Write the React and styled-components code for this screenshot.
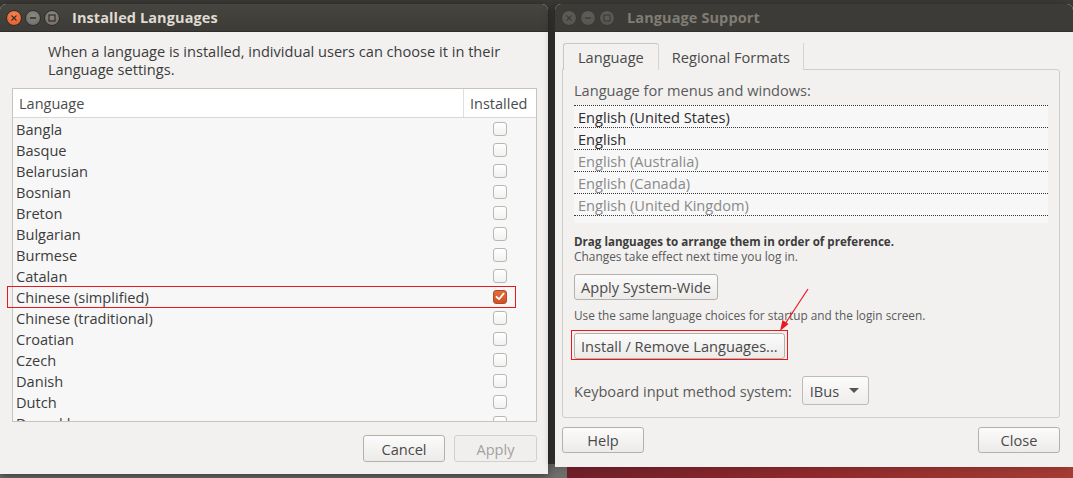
import React from 'react'
import styled, { createGlobalStyle } from 'styled-components'

const GlobalStyle = createGlobalStyle`
  html, body {
    margin: 0;
    padding: 0;
    width: 100%;
    height: 100%;
    overflow: hidden;
  }
  body {
    font-family: "Open Sans", "Noto Sans", "DejaVu Sans", sans-serif;
    background: #3b3a36;
  }
`

const Desktop = styled.div`
  position: relative;
  width: 1073px;
  height: 478px;
  background: #3b3a36;
  overflow: hidden;
`

const BottomStrip = styled.div`
  position: absolute;
  left: 0;
  right: 0;
  bottom: 0;
  height: 14px;
  background: #6e6e6c;
`

const Wallpaper = styled.div`
  position: absolute;
  left: 567px;
  right: 0;
  bottom: 0;
  height: 30px;
  background: linear-gradient(90deg, #6f1f2a 0%, #8f2a2c 50%, #a43c33 100%);
`

const Window = styled.div`
  position: absolute;
  left: ${p => p.$left}px;
  top: ${p => p.$top}px;
  width: ${p => p.$width}px;
  height: ${p => p.$height}px;
  display: flex;
  flex-direction: column;
  border-radius: 6px 6px 0 0;
  background: #f2f1f0;
  box-shadow: ${p => (p.$focused ? '0 2px 8px rgba(0,0,0,0.5)' : '-5px 0 8px -1px rgba(0,0,0,0.28)')};
  overflow: hidden;
`

const TitleBar = styled.div`
  height: 27px;
  flex: none;
  display: flex;
  align-items: center;
  padding-left: 6px;
  background: ${p => (p.$focused ? 'linear-gradient(#46453f, #3c3b37)' : '#3c3b37')};
  border-bottom: 1px solid ${p => (p.$focused ? '#2e2d2a' : '#33322e')};
`

const TitleButtons = styled.div`
  display: flex;
  gap: 3px;
  margin-right: 12px;
`

const RoundButton = styled.div`
  width: 16px;
  height: 16px;
  border-radius: 50%;
  display: flex;
  align-items: center;
  justify-content: center;
  box-sizing: border-box;
  border: 1px solid ${p => (p.$focused ? '#2f2e2b' : '#3a3935')};
  background: ${p =>
    p.$kind === 'close' && p.$focused
      ? 'radial-gradient(circle at 50% 35%, #f58a5c, #e2511f)'
      : p.$focused
        ? 'radial-gradient(circle at 50% 35%, #8a8883, #6c6a65)'
        : 'radial-gradient(circle at 50% 35%, #5e5d58, #54534e)'};
  color: ${p => (p.$focused ? '#3a2a25' : '#3e3d39')};
`

const TitleText = styled.div`
  font-weight: 700;
  font-size: 14.5px;
  color: ${p => (p.$focused ? '#dfdbd2' : '#807d74')};
  letter-spacing: 0.1px;
`

const Glyph = ({ kind }) => {
  if (kind === 'close') {
    return (
      <svg width="8" height="8" viewBox="0 0 8 8">
        <path d="M1.5 1.5 L6.5 6.5 M6.5 1.5 L1.5 6.5" stroke="currentColor" strokeWidth="1.2" />
      </svg>
    )
  }
  if (kind === 'min') {
    return (
      <svg width="8" height="8" viewBox="0 0 8 8">
        <path d="M1 4 H7" stroke="currentColor" strokeWidth="1.4" />
      </svg>
    )
  }
  return (
    <svg width="8" height="8" viewBox="0 0 8 8">
      <rect x="1" y="1" width="6" height="6" fill="none" stroke="currentColor" strokeWidth="1.2" />
    </svg>
  )
}

const WindowTitle = ({ focused, children }) => (
  <TitleBar $focused={focused}>
    <TitleButtons>
      {['close', 'min', 'max'].map(k => (
        <RoundButton key={k} $kind={k} $focused={focused}>
          <Glyph kind={k} />
        </RoundButton>
      ))}
    </TitleButtons>
    <TitleText $focused={focused}>{children}</TitleText>
  </TitleBar>
)

/* ---------- left dialog ---------- */

const DialogBody = styled.div`
  flex: 1;
  display: flex;
  flex-direction: column;
  padding: 10px 11px 0 12px;
  color: #3c3c3c;
`

const Intro = styled.p`
  margin: 0 0 10px 36px;
  font-size: 14.6px;
  line-height: 18px;
`

const Tree = styled.div`
  height: 334px;
  box-sizing: border-box;
  border: 1px solid #c6c4c0;
  background: #f7f7f7;
  display: flex;
  flex-direction: column;
  overflow: hidden;
`

const TreeHeader = styled.div`
  height: 28px;
  flex: none;
  display: flex;
  background: #ffffff;
  border-bottom: 1px solid #d9d7d3;
  font-size: 14.5px;
  color: #4c4c4c;
`

const HeaderCell = styled.div`
  display: flex;
  align-items: center;
  padding-left: 6px;
  flex: ${p => (p.$grow ? 1 : 'none')};
  width: ${p => (p.$grow ? 'auto' : '66px')};
  border-left: ${p => (p.$grow ? 'none' : '1px solid #e0deda')};
`

const TreeRow = styled.div`
  height: 21px;
  flex: none;
  display: flex;
  align-items: center;
  font-size: 14.6px;
`

const RowName = styled.div`
  flex: 1;
  padding-left: 3px;
  white-space: nowrap;
`

const RowCheck = styled.div`
  width: 73px;
  display: flex;
  justify-content: center;
`

const Checkbox = styled.div`
  width: 14px;
  height: 14px;
  box-sizing: border-box;
  border-radius: 3px;
  border: 1px solid ${p => (p.$checked ? '#b24a24' : '#b9b7b2')};
  background: ${p => (p.$checked ? 'linear-gradient(#e56a3c, #cf5326)' : 'linear-gradient(#ffffff, #f1f1f0)')};
  display: flex;
  align-items: center;
  justify-content: center;
`

const ButtonRow = styled.div`
  display: flex;
  justify-content: ${p => (p.$spread ? 'space-between' : 'flex-end')};
  gap: 9px;
  margin-top: ${p => p.$top}px;
`

const Button = styled.div`
  width: ${p => (p.$width ? `${p.$width}px` : 'auto')};
  height: ${p => p.$height || 27}px;
  box-sizing: border-box;
  padding: 0 ${p => (p.$width ? 0 : 6)}px;
  display: inline-flex;
  align-items: center;
  justify-content: center;
  border-radius: 3px;
  border: 1px solid ${p => (p.$disabled ? '#d2d0cc' : '#b3b1ac')};
  background: ${p => (p.$disabled ? '#f0efee' : 'linear-gradient(#fbfbfb, #ecebe9)')};
  color: ${p => (p.$disabled ? '#a3a29e' : '#4a4a4a')};
  font-size: 14.6px;
  white-space: nowrap;
`

const Highlight = styled.div`
  position: absolute;
  left: ${p => p.$left}px;
  top: ${p => p.$top}px;
  width: ${p => p.$width}px;
  height: ${p => p.$height}px;
  border: 1px solid #e8191d;
  box-sizing: border-box;
  pointer-events: none;
`

const languages = [
  'Bangla', 'Basque', 'Belarusian', 'Bosnian', 'Breton', 'Bulgarian', 'Burmese',
  'Catalan', 'Chinese (simplified)', 'Chinese (traditional)', 'Croatian', 'Czech',
  'Danish', 'Dutch', 'Dzongkha',
]

const CheckMark = () => (
  <svg width="10" height="9" viewBox="0 0 10 9">
    <path d="M1.5 4.8 L4 7.2 L8.6 1.6" fill="none" stroke="#ffffff" strokeWidth="1.8" strokeLinecap="round" strokeLinejoin="round" />
  </svg>
)

const InstalledLanguages = () => (
  <Window $left={0} $top={4} $width={548} $height={470} $focused>
    <WindowTitle focused>Installed Languages</WindowTitle>
    <DialogBody>
      <Intro>
        When a language is installed, individual users can choose it in their
        <br />
        Language settings.
      </Intro>
      <Tree>
        <TreeHeader>
          <HeaderCell $grow>Language</HeaderCell>
          <HeaderCell>Installed</HeaderCell>
        </TreeHeader>
        {languages.map(name => {
          const checked = name === 'Chinese (simplified)'
          return (
            <TreeRow key={name}>
              <RowName>{name}</RowName>
              <RowCheck>
                <Checkbox $checked={checked}>{checked && <CheckMark />}</Checkbox>
              </RowCheck>
            </TreeRow>
          )
        })}
      </Tree>
      <ButtonRow $top={13}>
        <Button $width={82}>Cancel</Button>
        <Button $width={83} $disabled>Apply</Button>
      </ButtonRow>
    </DialogBody>
    <Highlight $left={7} $top={282} $width={509} $height={22} />
  </Window>
)

/* ---------- right window ---------- */

const SupportBody = styled.div`
  flex: 1;
  display: flex;
  flex-direction: column;
  padding: 11px 13px 0 7px;
  color: #4a4a4a;
`

const Tabs = styled.div`
  display: flex;
  height: 26px;
  padding-left: 1px;
`

const Tab = styled.div`
  display: flex;
  align-items: center;
  padding: 0 ${p => (p.$active ? 14 : 13)}px;
  font-size: 14.6px;
  box-sizing: border-box;
  color: #4a4a4a;
  border: ${p => (p.$active ? '1px solid #c9c7c2' : 'none')};
  border-right: 1px solid #d6d4cf;
  border-bottom: none;
  border-radius: ${p => (p.$active ? '3px 3px 0 0' : '0')};
  background: #f2f1f0;
  position: relative;
  z-index: 1;
  margin-bottom: -1px;
  height: 27px;
`

const Frame = styled.div`
  height: 349px;
  box-sizing: border-box;
  border: 1px solid #cfcdc8;
  border-radius: 0 3px 3px 3px;
  padding: 11px 11px 0 11px;
  display: flex;
  flex-direction: column;
`

const Label = styled.div`
  font-size: ${p => p.$size || 14.6}px;
  line-height: ${p => p.$line || 18}px;
  font-weight: ${p => (p.$bold ? 700 : 400)};
  color: ${p => (p.$bold ? '#3c3c3c' : '#5a5a5a')};
  margin-top: ${p => p.$top || 0}px;
  white-space: nowrap;
`

const PrefList = styled.div`
  margin-top: 6px;
  background: #f7f7f7;
  padding-bottom: 7px;
`

const PrefRow = styled.div`
  height: 22px;
  box-sizing: border-box;
  display: flex;
  align-items: center;
  padding-left: 4px;
  font-size: 14.6px;
  border-top: 1px dotted #3a3a3a;
  &:last-child {
    border-bottom: 1px dotted #3a3a3a;
    height: 23px;
  }
  color: ${p => (p.$active ? '#2e2e2e' : '#8a8a8a')};
`

const Stack = styled.div`
  margin-top: ${p => p.$top}px;
  display: flex;
`

const RedWrap = styled.div`
  display: inline-flex;
  border: 1px solid #e8191d;
  padding: 2px 2px 0 2px;
  margin-left: -3px;
`

const KeyboardRow = styled.div`
  margin-top: 16px;
  display: flex;
  align-items: center;
  gap: 10px;
`

const Combo = styled.div`
  width: 67px;
  height: 29px;
  box-sizing: border-box;
  border: 1px solid #bdbbb6;
  border-radius: 3px;
  background: linear-gradient(#fbfbfb, #efeeec);
  display: flex;
  align-items: center;
  justify-content: space-between;
  padding: 0 9px 0 7px;
  font-size: 14.6px;
  color: #4a4a4a;
`

const Caret = styled.span`
  width: 0;
  height: 0;
  border-left: 5px solid transparent;
  border-right: 5px solid transparent;
  border-top: 5px solid #555;
`

const Arrow = () => (
  <svg
    width="40"
    height="50"
    viewBox="0 0 40 50"
    style={{ position: 'absolute', left: 776, top: 286 }}
  >
    <line x1="32" y1="3" x2="9" y2="38" stroke="#e8191d" strokeWidth="1.2" />
    <path d="M4 45 L6.5 34 L12.5 38 Z" fill="#e8191d" />
  </svg>
)

const prefs = [
  ['English (United States)', true],
  ['English', true],
  ['English (Australia)', false],
  ['English (Canada)', false],
  ['English (United Kingdom)', false],
]

const LanguageSupport = () => (
  <Window $left={555} $top={4} $width={518} $height={463}>
    <WindowTitle>Language Support</WindowTitle>
    <SupportBody>
      <Tabs>
        <Tab $active>Language</Tab>
        <Tab>Regional Formats</Tab>
      </Tabs>
      <Frame>
        <Label>Language for menus and windows:</Label>
        <PrefList>
          {prefs.map(([name, active]) => (
            <PrefRow key={name} $active={active}>{name}</PrefRow>
          ))}
        </PrefList>
        <Label $bold $size={11.6} $line={14} $top={12}>
          Drag languages to arrange them in order of preference.
        </Label>
        <Label $size={11.9} $line={14}>Changes take effect next time you log in.</Label>
        <Stack $top={11}>
          <Button $height={26}>Apply System-Wide</Button>
        </Stack>
        <Label $size={11.8} $line={14} $top={8}>
          Use the same language choices for startup and the login screen.
        </Label>
        <Stack $top={8}>
          <RedWrap>
            <Button $height={26}>Install / Remove Languages...</Button>
          </RedWrap>
        </Stack>
        <KeyboardRow>
          <Label>Keyboard input method system:</Label>
          <Combo>
            IBus
            <Caret />
          </Combo>
        </KeyboardRow>
      </Frame>
      <ButtonRow $top={9} $spread>
        <Button $width={82} $height={26}>Help</Button>
        <Button $width={82} $height={26}>Close</Button>
      </ButtonRow>
    </SupportBody>
  </Window>
)

export default function App() {
  return (
    <>
      <GlobalStyle />
      <Desktop>
        <BottomStrip />
        <Wallpaper />
        <InstalledLanguages />
        <LanguageSupport />
        <Arrow />
      </Desktop>
    </>
  )
}
